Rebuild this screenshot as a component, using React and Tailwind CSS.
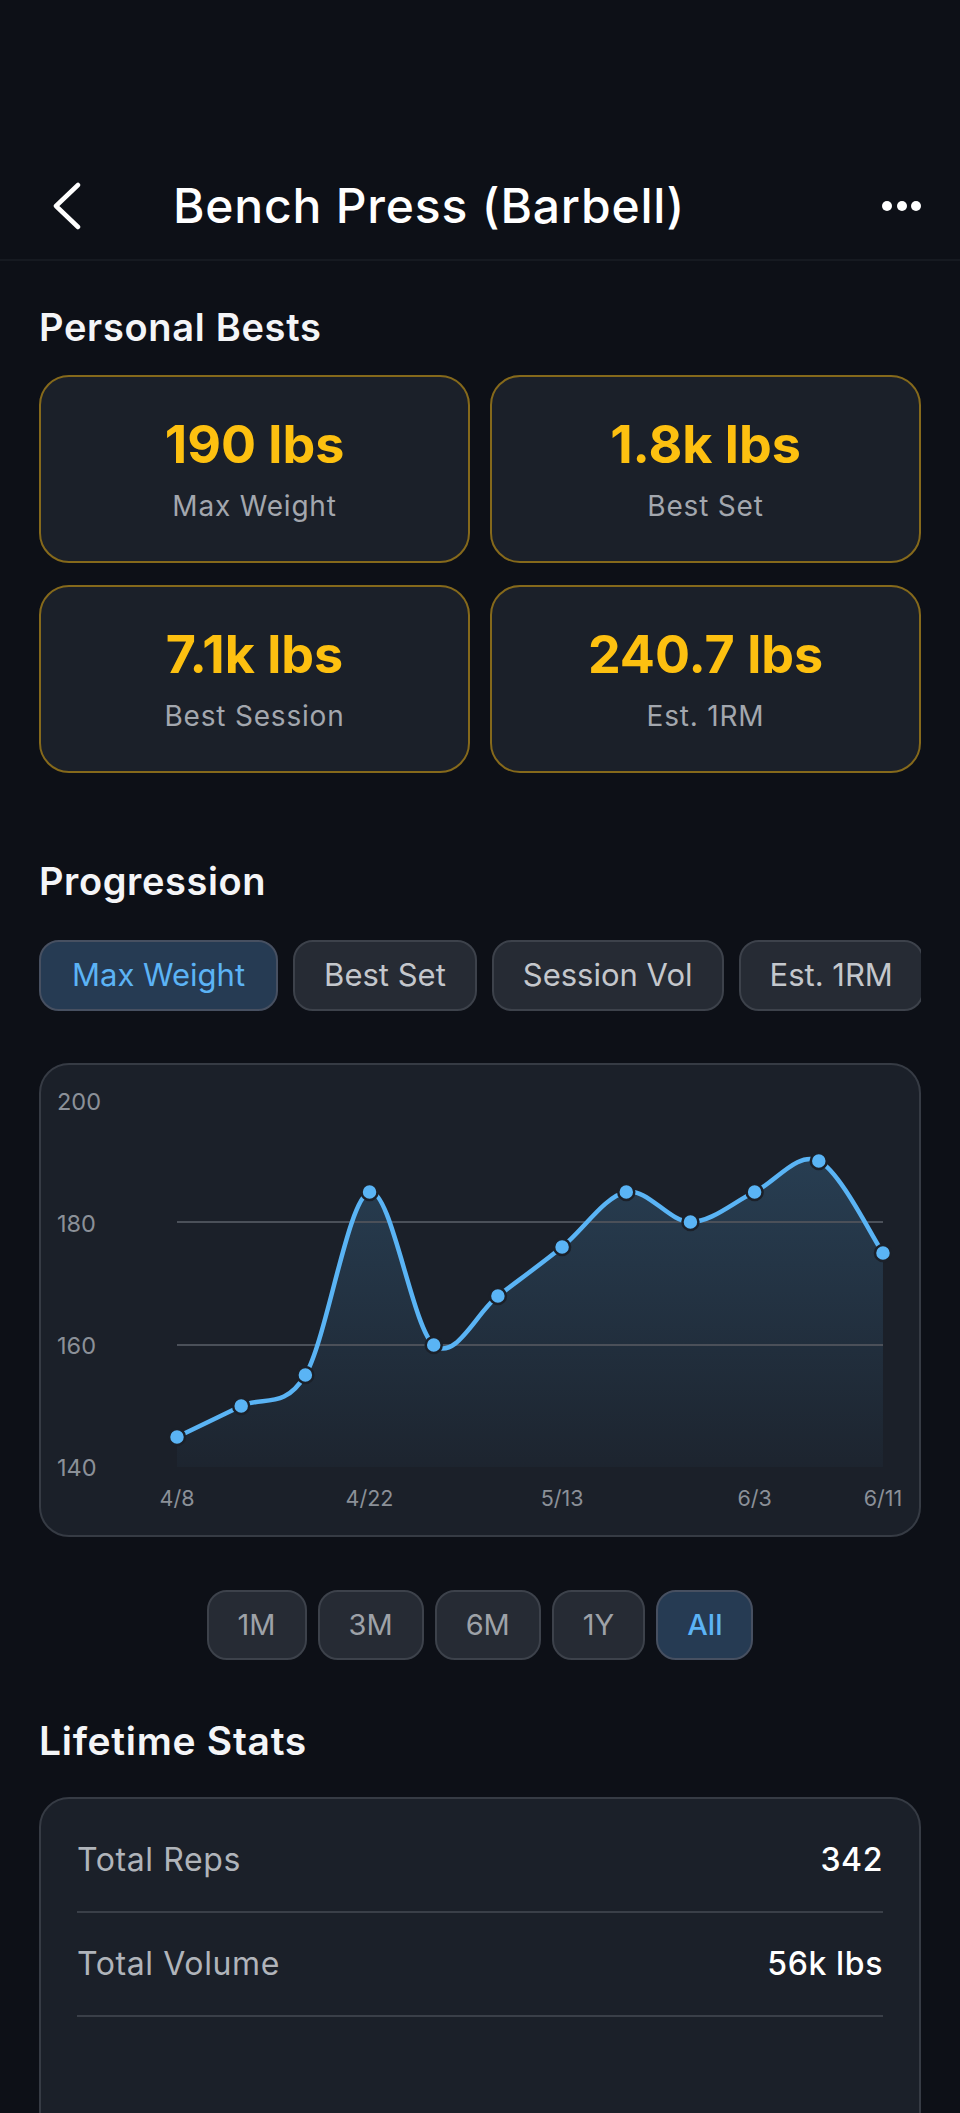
import React from "react";

const bests = [
  { value: "190 lbs", label: "Max Weight" },
  { value: "1.8k lbs", label: "Best Set" },
  { value: "7.1k lbs", label: "Best Session" },
  { value: "240.7 lbs", label: "Est. 1RM" },
];

const metrics = ["Max Weight", "Best Set", "Session Vol", "Est. 1RM"];
const ranges = ["1M", "3M", "6M", "1Y", "All"];

// chart coordinates (svg space, card inner box)
const ys = [372, 341, 310, 127, 280, 231, 182, 127, 157, 127, 96, 188];
const pts = ys.map((y, i) => [136 + i * 64.18, y]);

function smoothPath(p) {
  let d = `M${p[0][0]},${p[0][1]}`;
  for (let i = 0; i < p.length - 1; i++) {
    const p0 = p[i - 1] || p[i];
    const p1 = p[i];
    const p2 = p[i + 1];
    const p3 = p[i + 2] || p2;
    const c1x = p1[0] + (p2[0] - p0[0]) / 6;
    const c1y = p1[1] + (p2[1] - p0[1]) / 6;
    const c2x = p2[0] - (p3[0] - p1[0]) / 6;
    const c2y = p2[1] - (p3[1] - p1[1]) / 6;
    d += ` C${c1x},${c1y} ${c2x},${c2y} ${p2[0]},${p2[1]}`;
  }
  return d;
}

const linePath = smoothPath(pts);
const areaPath = `${linePath} L842,402 L136,402 Z`;

function Chart() {
  const yLabels = [
    ["200", 45],
    ["180", 167],
    ["160", 289],
    ["140", 411],
  ];
  const xLabels = [
    ["4/8", 0],
    ["4/22", 3],
    ["5/13", 6],
    ["6/3", 9],
    ["6/11", 11],
  ];
  return (
    <svg width="878" height="470" viewBox="0 0 878 470" className="block">
      <defs>
        <linearGradient id="area" x1="0" y1="0" x2="0" y2="1">
          <stop offset="0" stopColor="#5ab4f5" stopOpacity="0.2" />
          <stop offset="1" stopColor="#5ab4f5" stopOpacity="0.03" />
        </linearGradient>
      </defs>
      <path d={areaPath} fill="url(#area)" />
      <line x1="136" y1="157" x2="842" y2="157" stroke="#4b5059" strokeWidth="2" />
      <line x1="136" y1="280" x2="842" y2="280" stroke="#4b5059" strokeWidth="2" />
      {yLabels.map(([t, y]) => (
        <text key={t} x="16" y={y} fill="#8b9098" fontSize="23.5">
          {t}
        </text>
      ))}
      {xLabels.map(([t, i]) => (
        <text key={t} x={pts[i][0]} y="441" fill="#8b9098" fontSize="21.5" textAnchor="middle">
          {t}
        </text>
      ))}
      <path d={linePath} fill="none" stroke="#5ab4f5" strokeWidth="4.5" strokeLinecap="round" />
      {pts.map(([x, y], i) => (
        <circle key={i} cx={x} cy={y} r="8" fill="#5ab4f5" stroke="#1b2029" strokeWidth="2.5" />
      ))}
    </svg>
  );
}

export default function App() {
  return (
    <div className="h-[2113px] overflow-hidden bg-[#0d1017] font-['Inter',sans-serif] text-[#f4f5f7]">
      <div className="h-[153px]" />

      {/* Header */}
      <header className="flex h-[108px] items-center border-b-2 border-[#161a21]">
        <svg width="28" height="48" viewBox="0 0 28 48" className="ml-[53px]">
          <path d="M25 3 L3 24 L25 45" fill="none" stroke="white" strokeWidth="4.5" strokeLinecap="round" strokeLinejoin="round" />
        </svg>
        <h1 className="ml-[92px] text-[48px] leading-[54px] font-medium tracking-[0.8px] text-white">
          Bench Press (Barbell)
        </h1>
        <svg width="40" height="12" viewBox="0 0 40 12" className="ml-auto mr-[38px]">
          <circle cx="5" cy="6" r="5" fill="white" />
          <circle cx="20" cy="6" r="5" fill="white" />
          <circle cx="34" cy="6" r="5" fill="white" />
        </svg>
      </header>

      <main className="px-[39px]">
        <h2 className="mt-[43px] text-[38px] leading-[46px] font-semibold tracking-[0.7px]">
          Personal Bests
        </h2>
        <div className="mt-[25px] grid grid-cols-2 gap-x-[20px] gap-y-[22px]">
          {bests.map((b) => (
            <div
              key={b.label}
              className="flex h-[188px] flex-col items-center justify-center rounded-[30px] border-2 border-[#85691b] bg-[#1b2029]"
            >
              <div className="text-[52px] leading-[60px] font-bold text-[#fdc010]">{b.value}</div>
              <div className="mt-[13px] text-[28px] leading-[36px] tracking-[0.8px] text-[#a3a7ae]">
                {b.label}
              </div>
            </div>
          ))}
        </div>

        <h2 className="mt-[85px] text-[38px] leading-[46px] font-semibold tracking-[0.6px]">
          Progression
        </h2>
        <div className="mt-[36px] flex gap-[15px] overflow-hidden">
          {metrics.map((m, i) => (
            <div
              key={m}
              className={
                i === 0
                  ? "flex h-[71px] shrink-0 items-center rounded-[20px] border-2 border-[#475061] bg-[#263b53] px-[31px] text-[31px] text-[#5cb3f5]"
                  : "flex h-[71px] shrink-0 items-center rounded-[20px] border-2 border-[#3d424b] bg-[#262b34] px-[29px] text-[31px] text-[#c4c7cc]"
              }
            >
              {m}
            </div>
          ))}
        </div>

        <div className="mt-[52px] h-[474px] rounded-[30px] border-2 border-[#363b44] bg-[#1b2029]">
          <Chart />
        </div>

        <div className="mt-[53px] flex justify-center gap-[11px]">
          {ranges.map((r) => (
            <div
              key={r}
              className={
                r === "All"
                  ? "flex h-[70px] items-center rounded-[20px] border-2 border-[#475061] bg-[#263b53] px-[29px] text-[29px] font-medium text-[#5cb3f5]"
                  : "flex h-[70px] items-center rounded-[20px] border-2 border-[#3d424b] bg-[#262b34] px-[29px] text-[29px] text-[#9ea2a8]"
              }
            >
              {r}
            </div>
          ))}
        </div>

        <h2 className="mt-[58px] text-[39px] leading-[46px] font-semibold tracking-[0.7px]">
          Lifetime Stats
        </h2>
        <div className="mt-[33px] rounded-[30px] border-2 border-[#363b44] bg-[#1b2029] px-[36px] pt-[10px] pb-[160px]">
          <div className="flex items-center justify-between border-b-2 border-[#3a3f48] py-[31px] text-[32px] leading-[40px] tracking-[0.6px]">
            <span className="text-[#b0b4ba]">Total Reps</span>
            <span className="font-medium text-white">342</span>
          </div>
          <div className="flex items-center justify-between border-b-2 border-[#3a3f48] py-[31px] text-[32px] leading-[40px] tracking-[0.6px]">
            <span className="text-[#b0b4ba]">Total Volume</span>
            <span className="font-medium text-white">56k lbs</span>
          </div>
        </div>
      </main>
    </div>
  );
}
